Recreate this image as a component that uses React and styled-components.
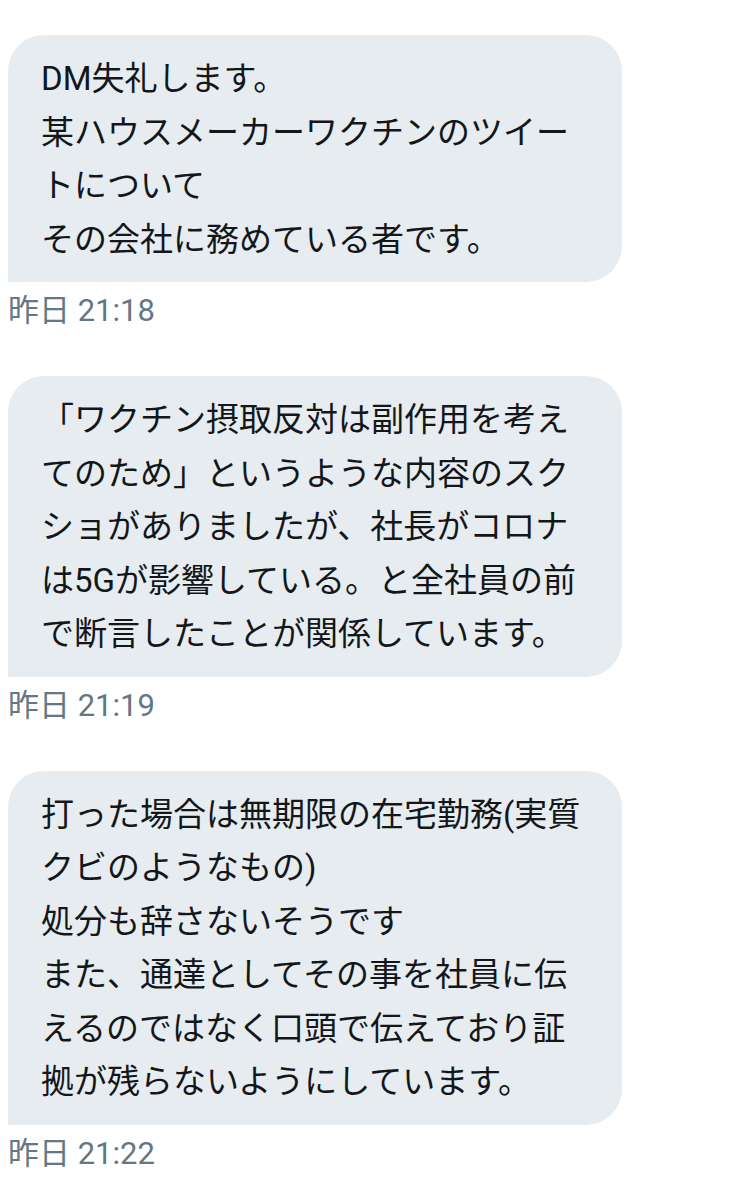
import React from "react";
import styled, { createGlobalStyle } from "styled-components";

const GlobalStyle = createGlobalStyle`
  html, body {
    margin: 0;
    padding: 0;
    background: #ffffff;
  }
  body {
    font-family: Roboto, "Noto Sans CJK JP", "Noto Sans", sans-serif;
  }
`;

const Thread = styled.div`
  display: flex;
  flex-direction: column;
  align-items: flex-start;
  padding: 35px 0 0 8px;
  width: 744px;
  box-sizing: border-box;
`;

const Message = styled.div`
  display: flex;
  flex-direction: column;
  align-items: flex-start;
  margin-bottom: 45px;
`;

const Bubble = styled.div`
  box-sizing: border-box;
  width: 614px;
  padding: 17px 32px 16px 33px;
  background: #e6ecf0;
  border-radius: 36px 36px 36px 0;
  color: #14171a;
  font-family: Roboto, "Noto Sans CJK JP", sans-serif;
  font-size: 33px;
  line-height: 53.5px;
  white-space: pre-wrap;
  word-break: normal;
  line-break: normal;
`;

const Time = styled.div`
  margin-top: 9px;
  color: #657786;
  font-family: Roboto, "Noto Sans CJK JP", sans-serif;
  font-size: 31px;
  line-height: 40px;
`;

const messages = [
  {
    text: "DM失礼します。\n某ハウスメーカーワクチンのツイートについて\nその会社に務めている者です。",
    time: "昨日 21:18",
  },
  {
    text: "「ワクチン摂取反対は副作用を考えてのため」というような内容のスクショがありましたが、社長がコロナは5Gが影響している。と全社員の前で断言したことが関係しています。",
    time: "昨日 21:19",
  },
  {
    text: "打った場合は無期限の在宅勤務(実質クビのようなもの)\n処分も辞さないそうです\nまた、通達としてその事を社員に伝えるのではなく口頭で伝えており証拠が残らないようにしています。",
    time: "昨日 21:22",
  },
];

export default function App() {
  return (
    <>
      <GlobalStyle />
      <Thread>
        {messages.map((m, i) => (
          <Message key={i}>
            <Bubble>{m.text}</Bubble>
            <Time>{m.time}</Time>
          </Message>
        ))}
      </Thread>
    </>
  );
}
